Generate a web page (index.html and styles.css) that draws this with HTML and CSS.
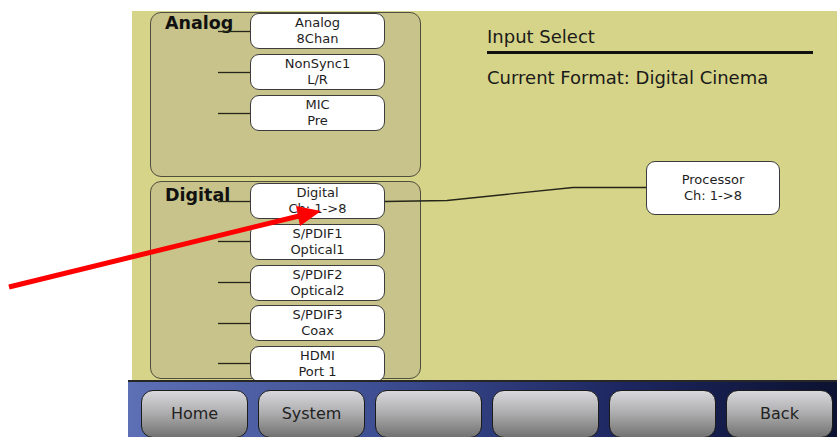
FILE: index.html
```html
<!DOCTYPE html>
<html lang="en">
<head>
    <meta charset="UTF-8">
    <meta name="viewport" content="width=device-width, initial-scale=1.0">
    <title>Input Select</title>
    <link rel="stylesheet" href="styles.css">
</head>
<body>
    <div class="panel">
        <div class="groups">
            <section class="group group-analog">
                <h3 class="group-label">Analog</h3>
                <div class="node-list">
                    <div class="node">Analog<br>8Chan</div>
                    <div class="node">NonSync1<br>L/R</div>
                    <div class="node">MIC<br>Pre</div>
                </div>
            </section>
            <section class="group group-digital">
                <h3 class="group-label">Digital</h3>
                <div class="node-list">
                    <div class="node">Digital<br>Ch: 1-&gt;8</div>
                    <div class="node">S/PDIF1<br>Optical1</div>
                    <div class="node">S/PDIF2<br>Optical2</div>
                    <div class="node">S/PDIF3<br>Coax</div>
                    <div class="node">HDMI<br>Port 1</div>
                </div>
            </section>
        </div>

        <div class="info">
            <h2 class="title">Input Select</h2>
            <p class="format">Current Format: Digital Cinema</p>
            <div class="node node-proc">Processor<br>Ch: 1-&gt;8</div>
        </div>

        <!-- wires between the input nodes and the processor -->
        <svg class="wires" width="705" height="369" viewBox="0 0 705 369">
            <g stroke="#26251a" stroke-width="1.3" fill="none">
                <line x1="86" y1="20.5" x2="118" y2="20.5"/>
                <line x1="86" y1="61.5" x2="118" y2="61.5"/>
                <line x1="86" y1="102.5" x2="118" y2="102.5"/>
                <line x1="86" y1="190.5" x2="118" y2="190.5"/>
                <line x1="86" y1="230.5" x2="118" y2="230.5"/>
                <line x1="86" y1="271.5" x2="118" y2="271.5"/>
                <line x1="86" y1="312.5" x2="118" y2="312.5"/>
                <line x1="86" y1="352.5" x2="118" y2="352.5"/>
                <polyline points="253,190.5 315,189.5 441,176.5 514,176.5"/>
            </g>
        </svg>
    </div>

    <div class="navbar">
        <button class="nav-btn">Home</button>
        <button class="nav-btn">System</button>
        <button class="nav-btn"></button>
        <button class="nav-btn"></button>
        <button class="nav-btn"></button>
        <button class="nav-btn">Back</button>
    </div>

    <svg class="pointer" width="837" height="437" viewBox="0 0 837 437">
        <line x1="9" y1="287" x2="299" y2="216" stroke="#ff0000" stroke-width="5"/>
        <polygon points="321,211 300,226 296,206" fill="#ff0000"/>
    </svg>
</body>
</html>
```

FILE: styles.css
```css
body {
    font-family: "DejaVu Sans", Verdana, sans-serif;
    background-color: #fff;
    color: #1a1a1a;
    margin: 0;
    padding: 0;
    width: 837px;
    height: 437px;
    overflow: hidden;
    position: relative;
}

.panel {
    position: relative;
    display: flex;
    margin: 11px 0 0 132px;
    padding-left: 18px;
    height: 369px;
    background-color: #d6d488;
    overflow: hidden;
}

.groups {
    display: flex;
    flex-direction: column;
    gap: 4px;
    width: 271px;
    padding-top: 1px;
    flex: none;
}

.group {
    box-sizing: border-box;
    display: flex;
    background-color: #c7c38a;
    border: 1px solid #4f4e3e;
    border-radius: 11px;
    padding-left: 14px;
}

.group-analog {
    height: 165px;
}

.group-digital {
    height: 198px;
    padding-top: 1px;
}

.group-label {
    width: 85px;
    margin: 0;
    font-size: 17.5px;
    line-height: 20px;
    font-weight: bold;
    color: #111;
}

.group-digital .group-label {
    margin-top: 2px;
}

.node-list {
    display: flex;
    flex-direction: column;
    gap: 5px;
}

.group-digital .node-list {
    gap: 4.75px;
}

.node {
    box-sizing: border-box;
    width: 135px;
    height: 36px;
    padding: 1px 0;
    background: #fff;
    border: 1px solid #3c3c3c;
    border-radius: 9px;
    font-size: 13px;
    line-height: 16px;
    text-align: center;
    color: #1e1e1e;
}

.info {
    width: 326px;
    margin-left: 66px;
    padding-top: 15px;
}

.title {
    margin: 0;
    padding-bottom: 3px;
    font-size: 18px;
    line-height: 22px;
    font-weight: normal;
    border-bottom: 3px solid #111;
}

.format {
    margin: 13px 0 0;
    font-size: 18px;
    line-height: 22px;
}

.node-proc {
    display: flex;
    flex-direction: column;
    justify-content: center;
    width: 134px;
    height: 54px;
    margin: 72px 0 0 159px;
}

.wires {
    position: absolute;
    left: 0;
    top: 0;
    pointer-events: none;
}

.navbar {
    display: flex;
    gap: 10px;
    margin-left: 128px;
    padding: 8px 0 0 13px;
    box-sizing: border-box;
    height: 57px;
    border-top: 2px solid #262626;
    background: linear-gradient(to right, #5e70b5 0%, #3e4e93 35%, #1d2660 70%, #0c1230 100%);
    overflow: hidden;
}

.nav-btn {
    flex: none;
    width: 107px;
    height: 48px;
    border: 1px solid #1b1b1b;
    border-radius: 12px;
    background: linear-gradient(#d8d8dc, #b0b0b2 45%, #727272);
    font-family: "DejaVu Sans", Verdana, sans-serif;
    font-size: 16px;
    color: #222;
    padding: 0 0 2px;
    cursor: pointer;
}

.pointer {
    position: absolute;
    left: 0;
    top: 0;
    pointer-events: none;
}
```
